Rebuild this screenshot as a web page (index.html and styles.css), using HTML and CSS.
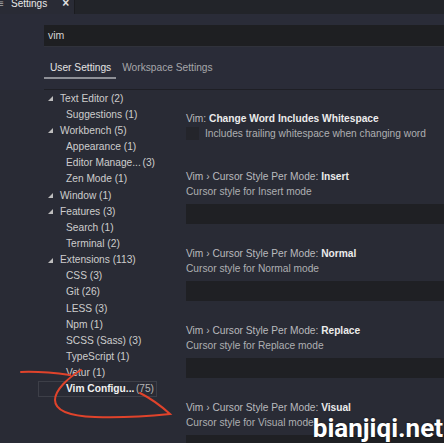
FILE: index.html
```html
<!DOCTYPE html>
<html>
<head>
<meta charset="utf-8">
<link rel="stylesheet" href="styles.css">
</head>
<body>
<div class="screen">
  <div class="page">
    <div class="tabbar">
      <div class="tab">
        <span class="tab-icon">≡</span>
        <span class="tab-title">Settings</span>
        <span class="tab-close">×</span>
      </div>
    </div>
    <div class="header">
      <div class="search">vim</div>
      <div class="scopes">
        <div class="scope active">User Settings</div>
        <div class="scope">Workspace Settings</div>
      </div>
      <div class="header-rule"></div>
    </div>
    <div class="content">
      <nav class="tree">
        <div class="row l1"><span class="twistie"></span>Text Editor (2)</div>
        <div class="row l2">Suggestions (1)</div>
        <div class="row l1"><span class="twistie"></span>Workbench (5)</div>
        <div class="row l2">Appearance (1)</div>
        <div class="row l2 trunc"><span class="label">Editor Manage...</span><span class="count">(3)</span></div>
        <div class="row l2">Zen Mode (1)</div>
        <div class="row l1"><span class="twistie"></span>Window (1)</div>
        <div class="row l1"><span class="twistie"></span>Features (3)</div>
        <div class="row l2">Search (1)</div>
        <div class="row l2">Terminal (2)</div>
        <div class="row l1"><span class="twistie"></span>Extensions (113)</div>
        <div class="row l2">CSS (3)</div>
        <div class="row l2">Git (26)</div>
        <div class="row l2">LESS (3)</div>
        <div class="row l2">Npm (1)</div>
        <div class="row l2">SCSS (Sass) (3)</div>
        <div class="row l2">TypeScript (1)</div>
        <div class="row l2">Vetur (1)</div>
        <div class="row l2 trunc selected"><span class="label">Vim Configu...</span><span class="count">(75)</span></div>
      </nav>
      <main class="list">
        <section class="setting first">
          <div class="title">Vim: <b>Change Word Includes Whitespace</b></div>
          <div class="check-row"><span class="checkbox"></span><span class="desc">Includes trailing whitespace when changing word</span></div>
        </section>
        <section class="setting">
          <div class="title">Vim › Cursor Style Per Mode: <b>Insert</b></div>
          <div class="desc">Cursor style for Insert mode</div>
          <div class="input"></div>
        </section>
        <section class="setting">
          <div class="title">Vim › Cursor Style Per Mode: <b>Normal</b></div>
          <div class="desc">Cursor style for Normal mode</div>
          <div class="input"></div>
        </section>
        <section class="setting">
          <div class="title">Vim › Cursor Style Per Mode: <b>Replace</b></div>
          <div class="desc">Cursor style for Replace mode</div>
          <div class="input"></div>
        </section>
        <section class="setting">
          <div class="title">Vim › Cursor Style Per Mode: <b>Visual</b></div>
          <div class="desc">Cursor style for Visual mode</div>
          <div class="input"></div>
        </section>
      </main>
    </div>
  </div>
  <svg class="annot" width="444" height="443" viewBox="0 0 444 443">
    <path d="M21 372 C 35 371.5, 52 372.5, 70 375" />
    <path d="M81 370 C 68 378, 55 390, 55 400 C 55 410, 68 416, 95 417 C 120 418, 150 416, 170 414 C 160 405, 150 398, 140 393" />
  </svg>
  <div class="watermark">bianjiqi.net</div>
</div>
</body>
</html>
```

FILE: styles.css
```css
html, body {
  margin: 0;
  padding: 0;
  background: #292b35;
}

body {
  font-family: "Liberation Sans", Arial, sans-serif;
  font-size: 10.2px;
  color: #cccccc;
}

.screen {
  position: relative;
  width: 444px;
  height: 443px;
  overflow: hidden;
  background: #292b35;
}

.page {
  margin-top: -8px;
}

/* editor tab strip */
.tabbar {
  height: 22px;
  display: flex;
  background: #222429;
}

.tab {
  width: 75px;
  box-sizing: border-box;
  display: flex;
  align-items: center;
  background: #292b35;
  border-right: 1px solid #1b1c20;
  color: #e8e8e8;
  font-size: 10px;
}

.tab-icon {
  width: 6px;
  margin-left: -2px;
  color: #a8a8a8;
  font-size: 10px;
}

.tab-title {
  margin-left: 7px;
}

.tab-close {
  margin-left: 15px;
  font-size: 12px;
  font-weight: bold;
  color: #e0e0e0;
}

/* settings header */
.header {
  padding-top: 11px;
  background: #2a2c38;
}

.search {
  margin-left: 44px;
  height: 21px;
  line-height: 21px;
  padding-left: 4px;
  background: #1e1f22;
  border-bottom: 1px solid #30323b;
  color: #d4d4d4;
  font-size: 10.5px;
}

.scopes {
  display: flex;
  margin-left: 44px;
  margin-top: 13px;
}

.scope {
  line-height: 15px;
  padding: 0 5px 2px 6px;
  border-bottom: 2px solid transparent;
  color: #a6a7ab;
}

.scope.active {
  color: #e4e4e4;
  border-bottom-color: #8e9097;
}

.header-rule {
  margin-left: 44px;
  margin-top: 10px;
  height: 1px;
  background: #1e1f25;
}

/* body */
.content {
  display: grid;
  grid-template-columns: 119px 1fr;
  column-gap: 29px;
  padding-left: 38px;
  background: #292b35;
}

.tree {
  display: flex;
  flex-direction: column;
}

.row {
  height: 16.17px;
  display: flex;
  align-items: center;
  box-sizing: border-box;
  white-space: nowrap;
  color: #cdcdcd;
}

.row.l1 {
  padding-left: 10px;
}

.row.l2 {
  padding-left: 28px;
}

.twistie {
  width: 0;
  height: 0;
  margin-right: 7px;
  margin-top: 1px;
  border-left: 5px solid transparent;
  border-bottom: 5px solid #bdbdbd;
}

.row.trunc {
  padding-right: 2px;
}

.row.trunc .count {
  margin-left: auto;
}

.row.selected {
  border: 1px solid #3d3f48;
  padding-left: 27px;
}

.row.selected .label {
  font-weight: bold;
  color: #f2f2f2;
}

.row.selected .count {
  color: #b4b4b4;
}

/* settings list */
.list {
  padding-top: 20.5px;
}

.setting {
  padding-bottom: 21.5px;
}

.setting.first {
  padding-bottom: 28px;
}

.title {
  line-height: 15px;
  color: #b9babd;
  white-space: nowrap;
}

.title b {
  color: #ececec;
}

.desc {
  line-height: 15px;
  color: #aeafb2;
  white-space: nowrap;
}

.check-row {
  display: flex;
  align-items: center;
  height: 15px;
  gap: 6px;
}

.checkbox {
  width: 13px;
  height: 13px;
  background: #24252b;
  margin-top: 1px;
}

.input {
  margin-top: 5.5px;
  height: 20px;
  background: #1f2024;
}

/* overlays */
.annot {
  position: absolute;
  left: 0;
  top: 0;
  pointer-events: none;
}

.annot path {
  fill: none;
  stroke: #e0432b;
  stroke-width: 2;
  stroke-linecap: round;
}

.watermark {
  position: absolute;
  right: 1px;
  bottom: 2px;
  font-family: Roboto, "Liberation Sans", sans-serif;
  font-weight: 700;
  font-size: 26px;
  line-height: 26px;
  color: #ffffff;
  text-shadow: 0 0 2px rgba(0, 0, 0, 0.7);
}
```
